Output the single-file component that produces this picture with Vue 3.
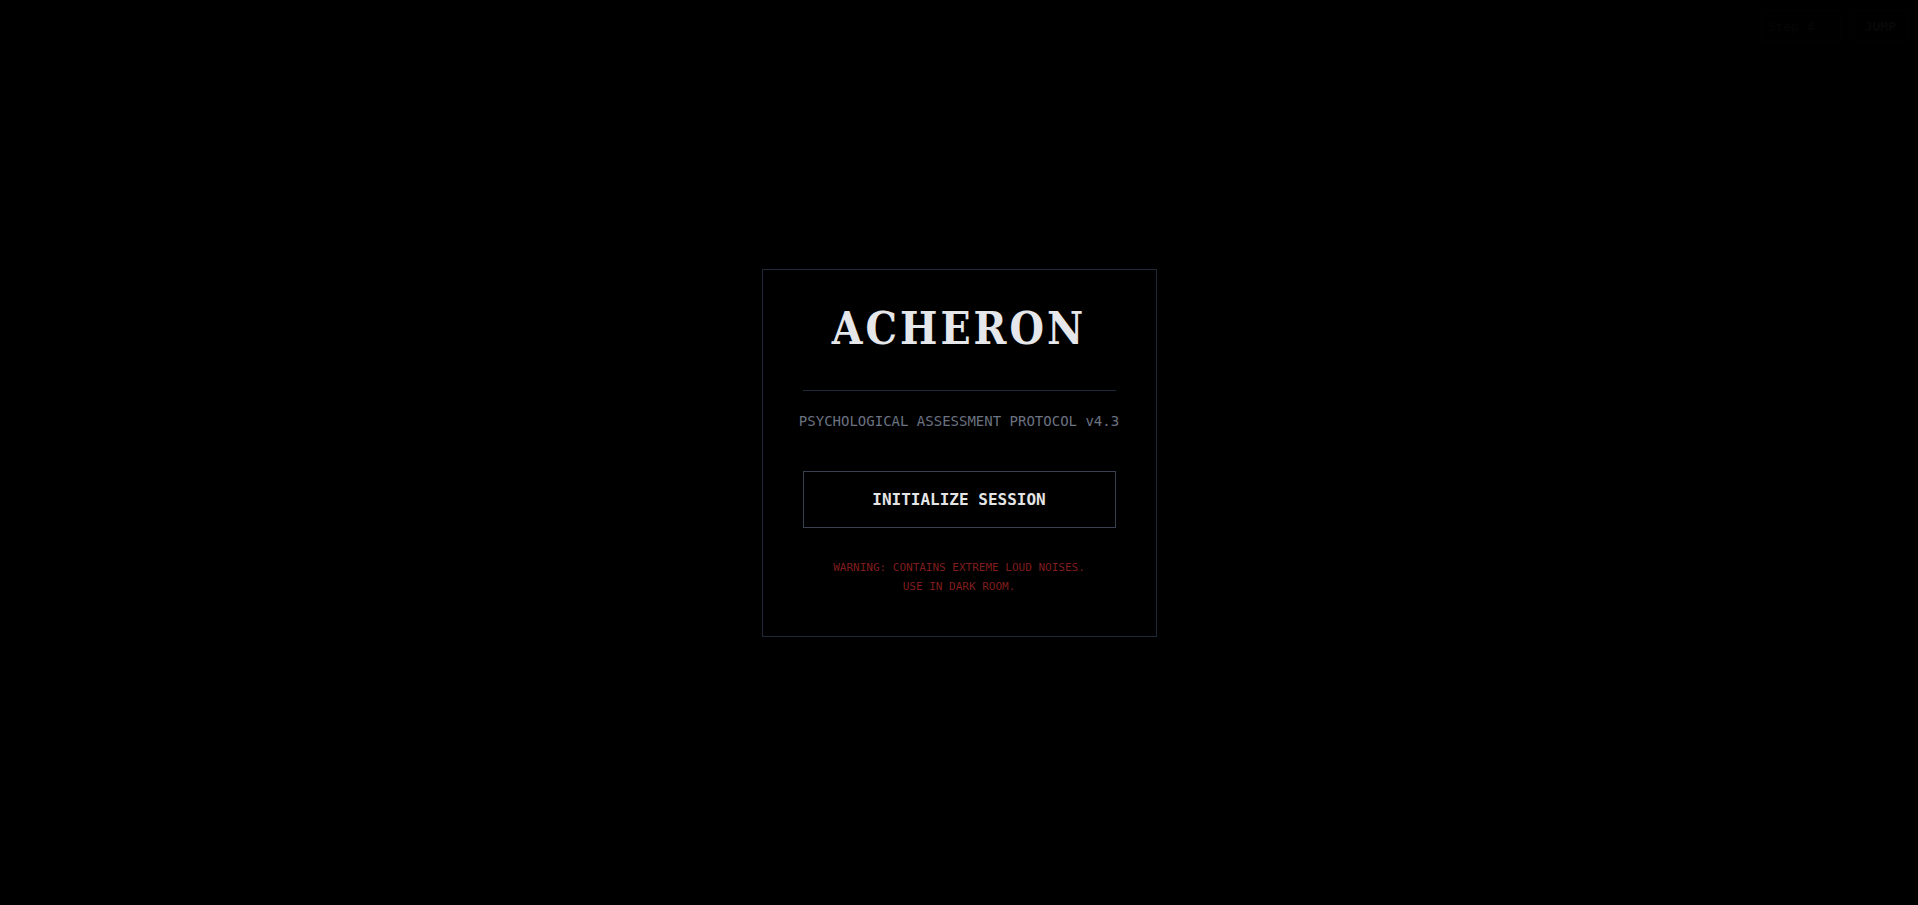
<script setup>
import { ref } from 'vue'

const step = ref('')
</script>

<template>
  <main class="screen">
    <form class="jump" @submit.prevent>
      <input v-model="step" class="jump-step" type="text" aria-label="Step number" placeholder="Step #" />
      <button class="jump-go" type="submit">JUMP</button>
    </form>

    <section class="card">
      <h1 class="title">ACHERON</h1>
      <p class="subtitle"><span>PSYCHOLOGICAL ASSESSMENT PROTOCOL v4.3</span></p>
      <button class="start" type="button">INITIALIZE SESSION</button>
      <p class="warning">
        WARNING: CONTAINS EXTREME LOUD NOISES.<br />
        USE IN DARK ROOM.
      </p>
    </section>
  </main>
</template>

<style>
body {
  margin: 0;
  background: #000;
}
</style>

<style scoped>
.screen {
  position: relative;
  display: flex;
  align-items: center;
  justify-content: center;
  min-height: 100vh;
  background: #000;
  font-family: "DejaVu Sans Mono", "Liberation Mono", monospace;
}

.jump {
  position: absolute;
  top: 10px;
  right: 10px;
  display: flex;
  gap: 12px;
  opacity: 0.03;
}

.jump-step,
.jump-go {
  box-sizing: border-box;
  height: 32px;
  border: 1px solid #4b5563;
  background: #000;
  color: #d1d5db;
  font-family: inherit;
  font-size: 13px;
}

.jump-step {
  width: 80px;
  padding: 0 6px;
}

.jump-step::placeholder {
  color: #9ca3af;
}

.jump-go {
  padding: 0 11px;
  font-weight: 700;
}

.card {
  box-sizing: border-box;
  width: 395px;
  max-width: 100%;
  padding: 40px;
  border: 1px solid #1f2937;
  text-align: center;
}

.title {
  margin: 0;
  padding-bottom: 42px;
  border-bottom: 1px solid #1f2937;
  color: #e5e7eb;
  font-family: "DejaVu Serif Condensed", "DejaVu Serif", serif;
  font-size: 44px;
  font-stretch: condensed;
  font-weight: 700;
  line-height: 38px;
  letter-spacing: 3px;
}

.subtitle {
  display: flex;
  justify-content: center;
  margin: 20px 0 40px;
  color: #6b7280;
  font-size: 14px;
  line-height: 20px;
  white-space: nowrap;
}

.start {
  display: block;
  width: 100%;
  padding: 16px;
  border: 1px solid #374151;
  background: #000;
  color: #e5e5e5;
  font-family: inherit;
  font-size: 16px;
  font-weight: 700;
  line-height: 23px;
  cursor: pointer;
}

.warning {
  margin: 30px 0 0;
  color: #7f1d1d;
  font-size: 11px;
  line-height: 19px;
}
</style>
